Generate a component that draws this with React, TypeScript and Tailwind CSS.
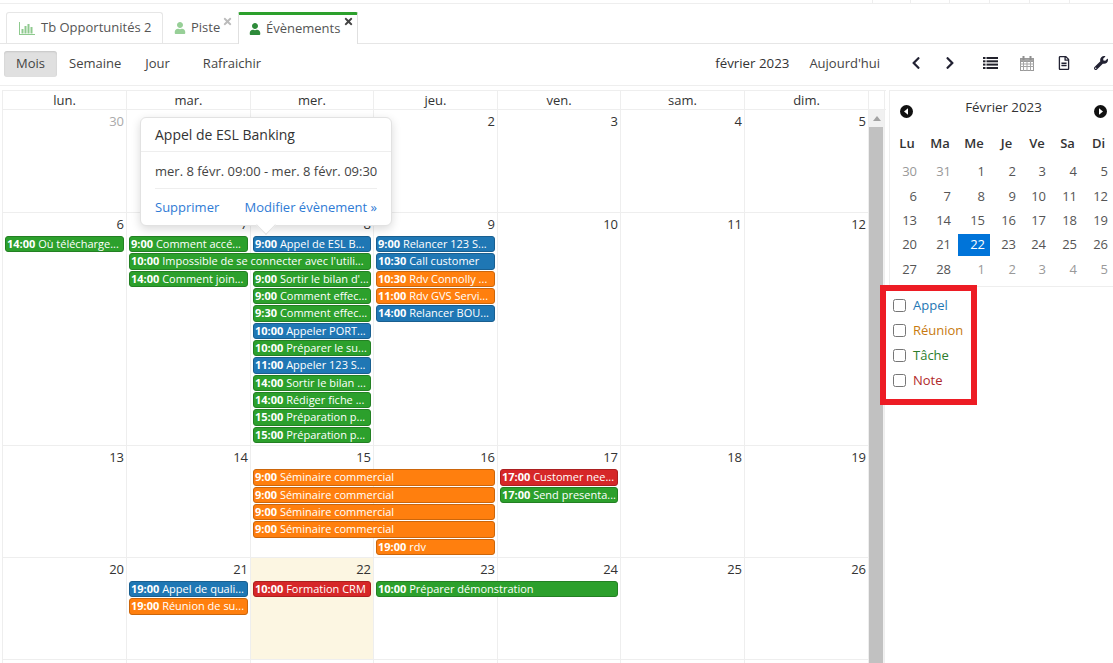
import React from "react";
import { FaChevronLeft, FaChevronRight, FaRegFileAlt, FaWrench, FaUser, FaTimes } from "react-icons/fa";

type Ev = { pos: string; color: string; time: string; text: string };

const green = "bg-[#2ca02c] border-[#238023]";
const blue = "bg-[#1f77b4] border-[#195f90]";
const orange = "bg-[#ff7f0e] border-[#cc660b]";
const red = "bg-[#d62728] border-[#ab1f20]";

const colStart = ["col-start-1", "col-start-2", "col-start-3", "col-start-4", "col-start-5", "col-start-6", "col-start-7"];
const cols = "grid-cols-[124px_124px_123px_124px_123px_124px_124px]";

const weeks: { days: (number | string)[]; cls: string; events: Ev[]; today?: number; muted?: number[] }[] = [
  {
    days: [30, 31, 1, 2, 3, 4, 5],
    cls: "h-[103px] grid-rows-[23px_1fr]",
    muted: [0],
    events: [],
  },
  {
    days: [6, 7, 8, 9, 10, 11, 12],
    cls: "h-[233px] grid-rows-[23px_repeat(12,17.33px)_1fr]",
    events: [
      { pos: "col-start-1 row-start-2", color: green, time: "14:00", text: "Où télécharge..." },
      { pos: "col-start-2 row-start-2", color: green, time: "9:00", text: "Comment accé..." },
      { pos: "col-start-2 col-span-2 row-start-3", color: green, time: "10:00", text: "Impossible de se connecter avec l'utili..." },
      { pos: "col-start-2 row-start-4", color: green, time: "14:00", text: "Comment join..." },
      { pos: "col-start-3 row-start-2", color: blue, time: "9:00", text: "Appel de ESL B..." },
      { pos: "col-start-3 row-start-4", color: green, time: "9:00", text: "Sortir le bilan d'..." },
      { pos: "col-start-3 row-start-5", color: green, time: "9:00", text: "Comment effec..." },
      { pos: "col-start-3 row-start-6", color: green, time: "9:30", text: "Comment effec..." },
      { pos: "col-start-3 row-start-7", color: blue, time: "10:00", text: "Appeler PORT..." },
      { pos: "col-start-3 row-start-8", color: green, time: "10:00", text: "Préparer le su..." },
      { pos: "col-start-3 row-start-9", color: blue, time: "11:00", text: "Appeler 123 S..." },
      { pos: "col-start-3 row-start-10", color: green, time: "14:00", text: "Sortir le bilan ..." },
      { pos: "col-start-3 row-start-11", color: green, time: "14:00", text: "Rédiger fiche ..." },
      { pos: "col-start-3 row-start-12", color: green, time: "15:00", text: "Préparation p..." },
      { pos: "col-start-3 row-start-13", color: green, time: "15:00", text: "Préparation p..." },
      { pos: "col-start-4 row-start-2", color: blue, time: "9:00", text: "Relancer 123 S..." },
      { pos: "col-start-4 row-start-3", color: blue, time: "10:30", text: "Call customer" },
      { pos: "col-start-4 row-start-4", color: orange, time: "10:30", text: "Rdv Connolly ..." },
      { pos: "col-start-4 row-start-5", color: orange, time: "11:00", text: "Rdv GVS Servi..." },
      { pos: "col-start-4 row-start-6", color: blue, time: "14:00", text: "Relancer BOU..." },
    ],
  },
  {
    days: [13, 14, 15, 16, 17, 18, 19],
    cls: "h-[112px] grid-rows-[23.33px_repeat(5,17.33px)_1fr]",
    events: [
      { pos: "col-start-3 col-span-2 row-start-2", color: orange, time: "9:00", text: "Séminaire commercial" },
      { pos: "col-start-3 col-span-2 row-start-3", color: orange, time: "9:00", text: "Séminaire commercial" },
      { pos: "col-start-3 col-span-2 row-start-4", color: orange, time: "9:00", text: "Séminaire commercial" },
      { pos: "col-start-3 col-span-2 row-start-5", color: orange, time: "9:00", text: "Séminaire commercial" },
      { pos: "col-start-4 row-start-6", color: orange, time: "19:00", text: "rdv" },
      { pos: "col-start-5 row-start-2", color: red, time: "17:00", text: "Customer nee..." },
      { pos: "col-start-5 row-start-3", color: green, time: "17:00", text: "Send presenta..." },
    ],
  },
  {
    days: [20, 21, 22, 23, 24, 25, 26],
    cls: "h-[102px] grid-rows-[23px_repeat(2,17.33px)_1fr]",
    today: 2,
    events: [
      { pos: "col-start-2 row-start-2", color: blue, time: "19:00", text: "Appel de quali..." },
      { pos: "col-start-2 row-start-3", color: orange, time: "19:00", text: "Réunion de su..." },
      { pos: "col-start-3 row-start-2", color: red, time: "10:00", text: "Formation CRM" },
      { pos: "col-start-4 col-span-2 row-start-2", color: green, time: "10:00", text: "Préparer démonstration" },
    ],
  },
  {
    days: ["", "", "", "", "", "", ""],
    cls: "h-[40px] grid-rows-[23px_1fr]",
    events: [],
  },
];

const mini = [
  [30, 31, 1, 2, 3, 4, 5],
  [6, 7, 8, 9, 10, 11, 12],
  [13, 14, 15, 16, 17, 18, 19],
  [20, 21, 22, 23, 24, 25, 26],
  [27, 28, 1, 2, 3, 4, 5],
];

function Week({ w }: { w: (typeof weeks)[number] }) {
  return (
    <div className={`grid ${cols} border-b border-[#eeeeee] ${w.cls}`}>
      {w.days.map((d, i) => (
        <div
          key={i}
          className={`${colStart[i]} row-start-1 row-span-full border-r border-[#eeeeee] pr-[2px] pt-[2px] text-right text-[13px] leading-[18px] ${
            w.today === i ? "bg-[#fcf6e2]" : ""
          } ${w.muted?.includes(i) ? "text-[#aaaaaa]" : "text-[#333333]"}`}
        >
          {d}
        </div>
      ))}
      {w.events.map((e, i) => (
        <div
          key={i}
          className={`${e.pos} ${e.color} mb-px ml-[2px] mr-[3px] overflow-hidden whitespace-nowrap rounded-[3px] border pl-px text-[11px] leading-[14px] text-white`}
        >
          <b className="font-bold">{e.time}</b> {e.text}
        </div>
      ))}
    </div>
  );
}

function Circle({ dir }: { dir: "l" | "r" }) {
  return (
    <svg width="13" height="13" viewBox="0 0 13 13" className="mt-[7px] shrink-0">
      <circle cx="6.5" cy="6.5" r="6.5" fill="#111111" />
      <path d={dir === "l" ? "M8 3.2 L8 9.8 L4 6.5 Z" : "M5 3.2 L5 9.8 L9 6.5 Z"} fill="#ffffff" />
    </svg>
  );
}

function ListIcon() {
  return (
    <svg width="15" height="12" viewBox="0 0 15 12" fill="#22222c">
      <rect x="0" y="0" width="2.5" height="2" />
      <rect x="3.5" y="0" width="11.5" height="2" />
      <rect x="0" y="3.3" width="2.5" height="2" />
      <rect x="3.5" y="3.3" width="11.5" height="2" />
      <rect x="0" y="6.6" width="2.5" height="2" />
      <rect x="3.5" y="6.6" width="11.5" height="2" />
      <rect x="0" y="10" width="2.5" height="2" />
      <rect x="3.5" y="10" width="11.5" height="2" />
    </svg>
  );
}

function CalIcon() {
  return (
    <svg width="14" height="15" viewBox="0 0 14 15" fill="none">
      <rect x="0.5" y="2.5" width="13" height="12" fill="#ffffff" stroke="#9a9a9a" />
      <rect x="0.5" y="2.5" width="13" height="3" fill="#a5a5a5" stroke="#9a9a9a" />
      <path d="M0 8h14M0 10.5h14M3.5 5v10M7 5v10M10.5 5v10" stroke="#a5a5a5" />
      <rect x="2.5" y="0" width="2" height="4" fill="#8f8f8f" />
      <rect x="9.5" y="0" width="2" height="4" fill="#8f8f8f" />
    </svg>
  );
}

export default function App() {
  return (
    <div className="relative flex h-[663px] w-[1113px] flex-col overflow-hidden bg-white font-['Open_Sans',sans-serif] text-[#333333]">
      {/* top strip */}
      <div className="flex h-[4px] shrink-0 border-b border-[#eeeeee] pl-[835px]">
        {[38, 38, 39, 40, 40, 40].map((x, i) => (
          <div key={i} className="border-r border-[#eeeeee]" style={{ width: x }} />
        ))}
      </div>

      {/* tabs */}
      <div className="flex h-[40px] shrink-0 items-end border-b border-[#e6e6e6] pl-[6px] text-[13px] text-[#555555]">
        <div className="flex h-[31px] w-[157px] items-center rounded-t-[3px] border border-b-0 border-[#e6e6e6] pl-[12px]">
          <svg width="16" height="13" viewBox="0 0 16 13" className="mr-[6px]" fill="#8fca8f">
            <path d="M0 0h1v12h15v1H0z" />
            <rect x="2.5" y="7" width="2" height="4.5" />
            <rect x="5.5" y="4" width="2" height="7.5" />
            <rect x="8.5" y="2" width="2" height="9.5" />
            <rect x="11.5" y="5" width="2" height="6.5" />
          </svg>
          Tb Opportunités 2
        </div>
        <div className="relative flex h-[31px] w-[75px] items-center pl-[11px]">
          <FaUser className="mr-[5px] text-[12px] text-[#97cf97]" />
          Piste
          <FaTimes className="absolute right-[5px] top-[4px] text-[11px] text-[#bbbbbb]" />
        </div>
        <div className="relative -mb-px flex h-[32px] w-[120px] items-center rounded-t-[2px] border-x border-t-[3px] border-x-[#e0e0e0] border-t-[#2ca02c] bg-white pb-[2px] pl-[10px]">
          <FaUser className="mr-[5px] text-[12px] text-[#2e8b3a]" />
          Évènements
          <FaTimes className="absolute right-[3px] top-[1px] text-[11px] text-[#444444]" />
        </div>
      </div>

      {/* toolbar */}
      <div className="flex h-[42px] shrink-0 items-start border-b border-[#eeeeee] pl-[4px] pt-[7px] text-[13px] leading-[24px] text-[#444444]">
        <div className="h-[26px] w-[53px] rounded-[3px] bg-[#e0e0e0] text-center shadow-[inset_0_1px_2px_rgba(0,0,0,0.12)]">Mois</div>
        <span className="ml-[12px]">Semaine</span>
        <span className="ml-[24px]">Jour</span>
        <span className="ml-[33px]">Rafraichir</span>
        <span className="ml-auto text-[13.3px] font-medium text-[#333333]">février 2023</span>
        <span className="ml-[20px]">Aujourd'hui</span>
        <div className="ml-[30px] flex h-[24px] items-center text-[14px] text-[#222233]">
          <span className="flex w-[12px] justify-center"><FaChevronLeft /></span>
          <span className="ml-[22px] flex w-[12px] justify-center"><FaChevronRight /></span>
          <span className="ml-[26px] flex w-[16px] justify-center"><ListIcon /></span>
          <span className="ml-[21px] flex w-[16px] justify-center"><CalIcon /></span>
          <span className="ml-[21px] flex w-[16px] justify-center"><FaRegFileAlt /></span>
          <span className="ml-[21px] flex w-[16px] justify-center"><FaWrench /></span>
          <span className="w-[4px]" />
        </div>
      </div>

      {/* main */}
      <div className="mt-[4px] flex min-h-0 flex-1">
        <div className="ml-[2px] flex w-[884px] shrink-0 flex-col border-l border-t border-[#eeeeee]">
          <div className="flex h-[19px] shrink-0 border-b border-[#eeeeee]">
            <div className={`grid w-[866px] ${cols}`}>
              {["lun.", "mar.", "mer.", "jeu.", "ven.", "sam.", "dim."].map((d) => (
                <div key={d} className="border-r border-[#eeeeee] text-center text-[13px] font-medium leading-[19px] text-[#333333]">
                  {d}
                </div>
              ))}
            </div>
            <div className="w-[16px] border-r border-[#eeeeee]" />
          </div>
          <div className="flex min-h-0 flex-1">
            <div className="w-[866px]">
              {weeks.map((w, i) => (
                <Week key={i} w={w} />
              ))}
            </div>
            <div className="flex w-[16px] flex-col border-r border-[#eeeeee] bg-[#f1f1f1]">
              <div className="flex h-[17px] shrink-0 items-center justify-center">
                <svg width="8" height="5" viewBox="0 0 8 5"><path d="M4 0 L8 5 L0 5 Z" fill="#a3a3a3" /></svg>
              </div>
              <div className="w-[14px] flex-1 bg-[#c1c1c1]" />
            </div>
          </div>
        </div>

        {/* right */}
        <div className="ml-[3px] flex flex-1 flex-col">
          <div className="h-[197px] shrink-0 border-b border-l border-t border-[#eeeeee] text-[13px]">
            <div className="flex items-start justify-between pl-[10px] pr-[6px] pt-[7px]">
              <Circle dir="l" />
              <span className="text-[13.3px] font-medium text-[#333333]">Février 2023</span>
              <Circle dir="r" />
            </div>
            <div className="mt-[15px] grid h-[27px] grid-cols-[32px_34px_34px_31px_30px_31px_31px] font-semibold text-[#333333]">
              {["Lu", "Ma", "Me", "Je", "Ve", "Sa", "Di"].map((d) => (
                <div key={d} className="pl-[2px] text-center leading-[20px]">{d}</div>
              ))}
            </div>
            <div className="grid auto-rows-[24.3px] grid-cols-[32px_34px_34px_31px_30px_31px_31px]">
              {mini.flatMap((row, r) =>
                row.map((d, c) => {
                  const out = (r === 0 && c < 2) || (r === 4 && c > 1);
                  const sel = r === 3 && c === 2;
                  return (
                    <div
                      key={`${r}-${c}`}
                      className={`my-px flex items-center justify-end pr-[5px] ${
                        sel ? "ml-[2px] bg-[#0074d9] text-white" : out ? "text-[#999999]" : "text-[#555555]"
                      }`}
                    >
                      {d}
                    </div>
                  );
                })
              )}
            </div>
          </div>

          <div className="relative z-10 -ml-[9px] -mt-[2px] h-[120px] w-[97px] border-[6px] border-[#ed1c24] bg-white pl-[7px] pt-[2px] text-[13px]">
            {[
              ["Appel", "text-[#1f77b4]"],
              ["Réunion", "text-[#c77a10]"],
              ["Tâche", "text-[#2c7d2c]"],
              ["Note", "text-[#b02a2a]"],
            ].map(([t, c]) => (
              <label key={t} className="flex h-[25px] items-center">
                <input type="checkbox" className="m-0 h-[13px] w-[13px]" />
                <span className={`ml-[7px] ${c}`}>{t}</span>
              </label>
            ))}
          </div>
        </div>
      </div>

      {/* popover */}
      <div className="absolute left-[140px] top-[117px] h-[109px] w-[252px] rounded-[6px] border border-[#e2e2e2] bg-white shadow-[0_3px_10px_rgba(0,0,0,0.15)]">
        <div className="flex h-[34px] items-center border-b border-[#eeeeee] pb-px pl-[14px] text-[14px] font-medium text-[#333333]">
          Appel de ESL Banking
        </div>
        <div className="mx-[14px]">
          <div className="flex h-[37px] items-center whitespace-nowrap border-b border-[#eeeeee] pt-[3px] text-[13px] text-[#444444]">
            mer. 8 févr. 09:00 - mer. 8 févr. 09:30
          </div>
          <div className="flex h-[36px] items-center justify-between whitespace-nowrap pt-[1px] text-[13px] text-[#2f7bd5]">
            <span>Supprimer</span>
            <span>Modifier évènement »</span>
          </div>
        </div>
        <div className="absolute bottom-[-7px] left-[118px] h-[14px] w-[14px] rotate-45 border-b border-r border-[#e2e2e2] bg-white" />
      </div>
    </div>
  );
}
